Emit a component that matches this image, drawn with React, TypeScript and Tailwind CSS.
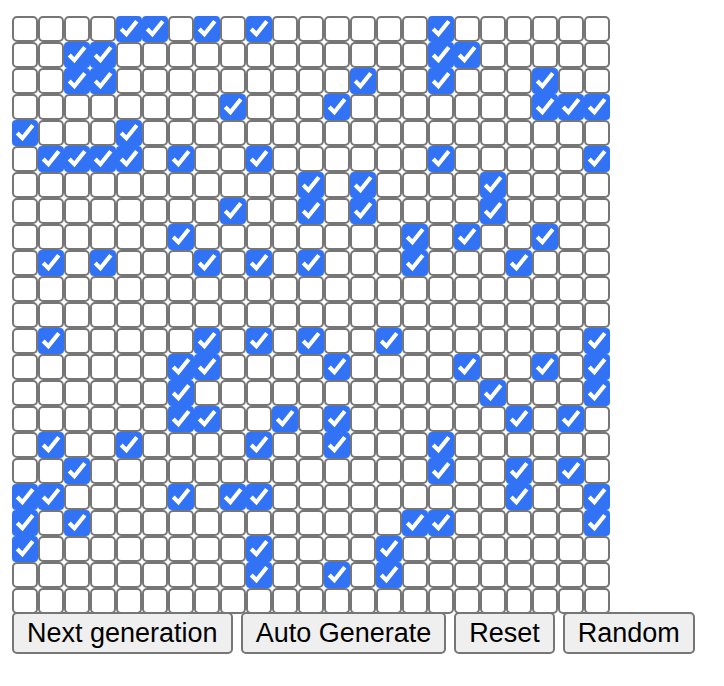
import { useEffect, useState } from "react";

const SIZE = 23;

// "#" is a living cell, "." is a dead one.
const START = [
  "....##.#.#......#......",
  "..##............##.....",
  "..##.........#..#...#..",
  "........#...#.......###",
  "#...#..................",
  ".####.#..#......#.....#",
  "...........#.#....#....",
  "........#..#.#....#....",
  "......#........#.#..#..",
  ".#.#...#.#.#...#...#...",
  ".......................",
  ".......................",
  ".#.....#.#.#..#.......#",
  "......##....#....#..#.#",
  "......#...........#...#",
  "......##..#.#......#.#.",
  ".#..#....#..#...#......",
  "..#.............#..#.#.",
  "##....#.##.........#..#",
  "#.#............##.....#",
  "#........#....#........",
  ".........#..#.#........",
  ".......................",
];

type Board = boolean[][];

const parse = (rows: string[]): Board => rows.map((row) => [...row].map((c) => c === "#"));

const fill = (alive: () => boolean): Board =>
  Array.from({ length: SIZE }, () => Array.from({ length: SIZE }, alive));

function step(board: Board): Board {
  return board.map((row, y) =>
    row.map((alive, x) => {
      let count = 0;
      for (let dy = -1; dy <= 1; dy++) {
        for (let dx = -1; dx <= 1; dx++) {
          if ((dx || dy) && board[y + dy]?.[x + dx]) count++;
        }
      }
      return count === 3 || (alive && count === 2);
    }),
  );
}

function Cell({ alive, label, onToggle }: { alive: boolean; label: string; onToggle: () => void }) {
  return (
    <label className="grid size-[26px]">
      <input
        type="checkbox"
        aria-label={label}
        checked={alive}
        onChange={onToggle}
        className="col-start-1 row-start-1 m-0 size-full appearance-none rounded-[5px] border-2 border-[#767676] bg-white checked:rounded-[4px] checked:border-[#3273f6] checked:bg-[#3273f6]"
      />
      {alive && (
        <svg
          viewBox="0 0 26 26"
          aria-hidden="true"
          className="pointer-events-none z-10 col-start-1 row-start-1 size-full"
        >
          <path d="M5.2 13 10.4 18.2 20.8 5.2" fill="none" stroke="white" strokeWidth="4.16" />
        </svg>
      )}
    </label>
  );
}

function Button({ text, onClick }: { text: string; onClick: () => void }) {
  return (
    <button
      type="button"
      onClick={onClick}
      className="h-[42px] rounded-[5px] border-2 border-[#767676] bg-[#efefef] px-[13px] text-[27px] leading-[38px] text-black"
    >
      {text}
    </button>
  );
}

export default function App() {
  const [board, setBoard] = useState<Board>(() => parse(START));
  const [running, setRunning] = useState(false);

  useEffect(() => {
    if (!running) return;
    const timer = setInterval(() => setBoard(step), 500);
    return () => clearInterval(timer);
  }, [running]);

  const toggle = (y: number, x: number) =>
    setBoard((b) => b.map((row, r) => row.map((v, c) => (r === y && c === x ? !v : v))));

  const reset = () => {
    setRunning(false);
    setBoard(fill(() => false));
  };

  return (
    <main className="bg-white px-3 py-4 font-['Liberation_Sans',Arial,sans-serif]">
      <div>
        {board.map((row, y) => (
          <div key={y} className="flex">
            {row.map((alive, x) => (
              <Cell
                key={x}
                alive={alive}
                label={`Row ${y + 1}, column ${x + 1}`}
                onToggle={() => toggle(y, x)}
              />
            ))}
          </div>
        ))}
      </div>
      <div className="relative z-20 -mt-0.5 flex flex-wrap gap-2">
        <Button text="Next generation" onClick={() => setBoard(step)} />
        <Button text="Auto Generate" onClick={() => setRunning((r) => !r)} />
        <Button text="Reset" onClick={reset} />
        <Button text="Random" onClick={() => setBoard(fill(() => Math.random() < 0.2))} />
      </div>
    </main>
  );
}
